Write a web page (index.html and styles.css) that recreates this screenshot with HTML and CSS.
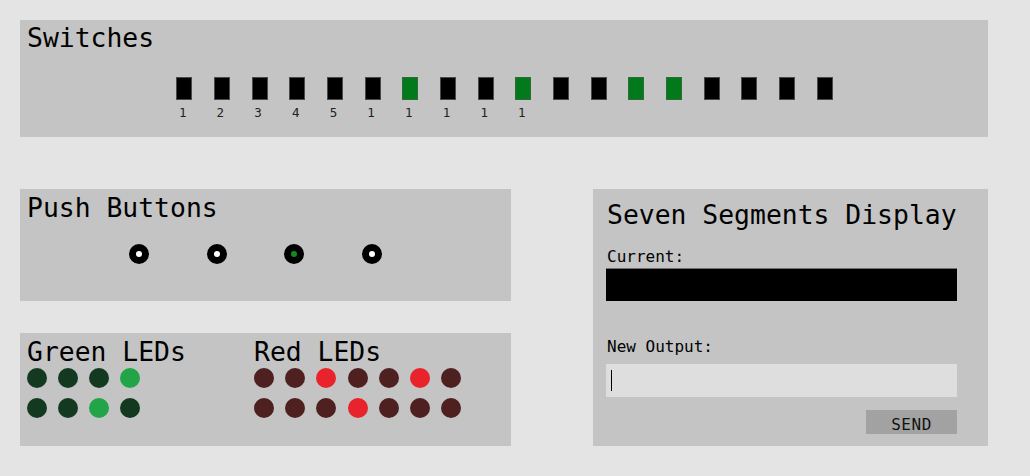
FILE: index.html
```html
<!DOCTYPE html>
<html>
<head>
<meta charset="utf-8">
<link rel="stylesheet" href="styles.css">
</head>
<body>
<div class="page">
  <section class="panel switches">
    <h2 class="title">Switches</h2>
    <div class="switch-row">
      <div class="sw"><div class="sw-box"></div><span class="sw-label">1</span></div>
      <div class="sw"><div class="sw-box"></div><span class="sw-label">2</span></div>
      <div class="sw"><div class="sw-box"></div><span class="sw-label">3</span></div>
      <div class="sw"><div class="sw-box"></div><span class="sw-label">4</span></div>
      <div class="sw"><div class="sw-box"></div><span class="sw-label">5</span></div>
      <div class="sw"><div class="sw-box"></div><span class="sw-label">1</span></div>
      <div class="sw"><div class="sw-box on"></div><span class="sw-label">1</span></div>
      <div class="sw"><div class="sw-box"></div><span class="sw-label">1</span></div>
      <div class="sw"><div class="sw-box"></div><span class="sw-label">1</span></div>
      <div class="sw"><div class="sw-box on"></div><span class="sw-label">1</span></div>
      <div class="sw"><div class="sw-box"></div><span class="sw-label"></span></div>
      <div class="sw"><div class="sw-box"></div><span class="sw-label"></span></div>
      <div class="sw"><div class="sw-box on"></div><span class="sw-label"></span></div>
      <div class="sw"><div class="sw-box on"></div><span class="sw-label"></span></div>
      <div class="sw"><div class="sw-box"></div><span class="sw-label"></span></div>
      <div class="sw"><div class="sw-box"></div><span class="sw-label"></span></div>
      <div class="sw"><div class="sw-box"></div><span class="sw-label"></span></div>
      <div class="sw"><div class="sw-box"></div><span class="sw-label"></span></div>
    </div>
  </section>

  <div class="lower">
    <div class="left-col">
      <section class="panel push">
        <h2 class="title">Push Buttons</h2>
        <div class="btn-row">
          <div class="pbtn"></div>
          <div class="pbtn"></div>
          <div class="pbtn pressed"></div>
          <div class="pbtn"></div>
        </div>
      </section>
      <section class="panel leds">
        <div class="led-group green-group">
          <h2 class="title">Green LEDs</h2>
          <div class="led-grid g4">
            <span class="led g"></span><span class="led g"></span><span class="led g"></span><span class="led g on"></span>
            <span class="led g"></span><span class="led g"></span><span class="led g on"></span><span class="led g"></span>
          </div>
        </div>
        <div class="led-group red-group">
          <h2 class="title">Red LEDs</h2>
          <div class="led-grid r7">
            <span class="led r"></span><span class="led r"></span><span class="led r on"></span><span class="led r"></span><span class="led r"></span><span class="led r on"></span><span class="led r"></span>
            <span class="led r"></span><span class="led r"></span><span class="led r"></span><span class="led r on"></span><span class="led r"></span><span class="led r"></span><span class="led r"></span>
          </div>
        </div>
      </section>
    </div>

    <section class="panel seven">
      <h2 class="title">Seven Segments Display</h2>
      <div class="seven-body">
        <div class="label first">Current:</div>
        <div class="current"></div>
        <div class="label second">New Output:</div>
        <div class="input"><span class="caret"></span></div>
        <div class="actions"><button class="send">SEND</button></div>
      </div>
    </section>
  </div>
</div>
</body>
</html>
```

FILE: styles.css
```css
* { box-sizing: border-box; }

html, body {
  margin: 0;
  padding: 0;
  background: #e4e4e4;
  font-family: "DejaVu Sans Mono", "Liberation Mono", monospace;
  color: #000;
}

.page {
  padding: 20px;
  width: 1008px;
}

.panel {
  background: #c4c4c4;
}

.title {
  margin: 0;
  font-weight: normal;
  font-size: 26.4px;
  line-height: 31px;
  white-space: nowrap;
}

/* Switches */
.switches {
  height: 117px;
  padding: 2px 7px 0;
}

.switch-row {
  display: flex;
  justify-content: center;
  gap: 21.7px;
  margin-top: 24px;
  padding-left: 1px;
}

.sw {
  width: 16px;
  display: flex;
  flex-direction: column;
  align-items: center;
}

.sw-box {
  width: 16px;
  height: 23px;
  background: #000;
  border: 1px solid #4a4a4a;
}

.sw-box.on {
  background: #027a1b;
  border-color: #2f6b36;
}

.sw-label {
  margin-top: 6px;
  font-size: 12.5px;
  line-height: 14px;
  height: 14px;
  color: #222;
  margin-left: -3px;
}

/* Lower area */
.lower {
  display: flex;
  gap: 82px;
  margin-top: 52px;
}

.left-col {
  width: 491px;
  display: flex;
  flex-direction: column;
  gap: 32px;
}

.push {
  height: 112px;
  padding: 3px 7px 0;
}

.btn-row {
  display: flex;
  gap: 57.7px;
  margin-top: 21px;
  padding-left: 102px;
}

.pbtn {
  width: 20px;
  height: 20px;
  border-radius: 50%;
  border: 7px solid #000;
  background: #fff;
}

.pbtn.pressed {
  background: #0f8a24;
}

.leds {
  height: 113px;
  padding: 3px 7px 0;
  display: flex;
}

.green-group {
  width: 227px;
}

.led-grid {
  display: grid;
  grid-auto-rows: 20px;
  column-gap: 11px;
  row-gap: 10px;
  margin-top: 1px;
}

.g4 { grid-template-columns: repeat(4, 20px); }
.r7 { grid-template-columns: repeat(7, 20px); column-gap: 11.2px; }

.led {
  width: 20px;
  height: 20px;
  border-radius: 50%;
  display: block;
}

.led.g { background: #133a20; }
.led.g.on { background: #21a548; }
.led.r { background: #4f2020; }
.led.r.on { background: #e8232b; }

/* Seven segments */
.seven {
  width: 395px;
  height: 257px;
  padding: 10px 0 0 13px;
}

.seven .title {
  padding-left: 1px;
}

.seven-body {
  width: 351px;
}

.label {
  font-size: 16px;
  line-height: 19px;
  padding-left: 1px;
}

.label.first { margin-top: 17px; }
.label.second { margin-top: 36px; }

.current {
  margin-top: 2px;
  height: 33px;
  background: #000;
  border-top: 1px solid #707070;
}

.input {
  margin-top: 8px;
  height: 33px;
  background: #dedede;
  padding: 6px 0 0 5px;
}

.caret {
  display: block;
  width: 1px;
  height: 21px;
  background: #000;
}

.actions {
  display: flex;
  justify-content: flex-end;
  margin-top: 13px;
}

.send {
  width: 91px;
  height: 24px;
  border: none;
  background: #a2a2a2;
  font-family: "DejaVu Sans Mono", "Liberation Mono", monospace;
  font-size: 16px;
  letter-spacing: 0.5px;
  color: #111;
  padding: 5px 0 0;
  margin: 0;
}
```
